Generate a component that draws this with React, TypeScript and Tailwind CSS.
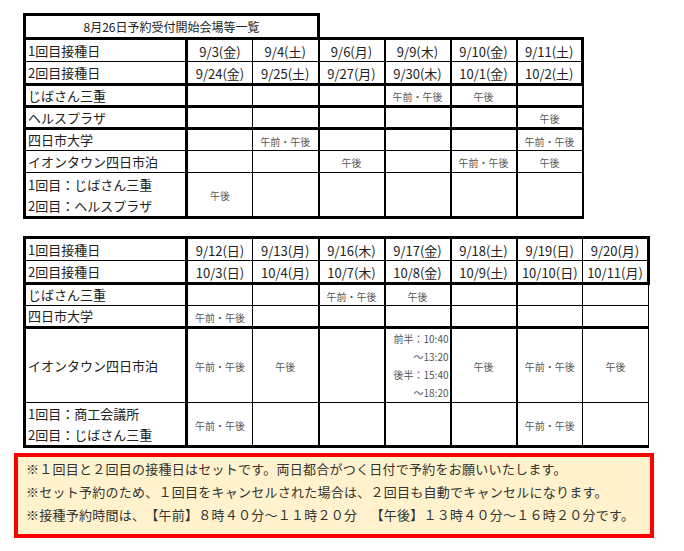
import React from "react";

const RB: Record<number, string> = {
  0: "",
  1: "border-r border-r-black",
  2: "border-r-2 border-r-black",
  3: "border-r-[3px] border-r-black",
};
const BB: Record<number, string> = {
  0: "",
  1: "border-b border-b-black",
  2: "border-b-2 border-b-black",
  3: "border-b-[3px] border-b-black",
};

type Row = {
  label: React.ReactNode;
  cells: React.ReactNode[];
  h: string;
  bottom: number;
  rights: number[];
  top?: boolean;
  date?: boolean;
  tall?: boolean;
};

function Slot({ t }: { t: string }) {
  return <span className="text-[10px] text-[#555]">{t}</span>;
}

function Sheet({ rows, cols, title }: { rows: Row[]; cols: number; title?: string }) {
  return (
    <table className="ml-[23px] border-collapse table-fixed">
      <colgroup>
        <col className="w-[162px]" />
        {Array.from({ length: cols }).map((_, i) => (
          <col key={i} className="w-[66px]" />
        ))}
      </colgroup>
      <tbody>
        {title && (
          <tr className="h-[24px]">
            <td
              colSpan={3}
              className="border-[3px] border-black p-0 text-center text-[12px] text-[#222] leading-[16px]"
            >
              {title}
            </td>
            <td colSpan={cols - 2} className="p-0"></td>
          </tr>
        )}
        {rows.map((r, ri) => (
          <tr key={ri} className={r.h}>
            <td
              className={`border-l-[3px] border-l-black p-0 pl-[2px] text-left align-middle text-[13px] text-[#222] ${r.tall ? "leading-[21px]" : "leading-[16px]"} ${RB[r.rights[0]]} ${BB[r.bottom]} ${r.top ? "border-t-[3px] border-t-black" : ""}`}
            >
              {r.label}
            </td>
            {r.cells.map((c, ci) => (
              <td
                key={ci}
                className={`text-center align-middle p-0 leading-[16px] ${RB[r.rights[ci + 1]]} ${BB[r.bottom]} ${r.top ? "border-t-[3px] border-t-black" : ""}`}
              >
                {typeof c === "string" ? (
                  r.date ? (
                    <span className="text-[13px] text-[#222] whitespace-nowrap">{c}</span>
                  ) : (
                    <Slot t={c} />
                  )
                ) : (
                  c
                )}
              </td>
            ))}
          </tr>
        ))}
      </tbody>
    </table>
  );
}

const AMPM = "午前・午後";
const PM = "午後";

const topHead = [3, 1, 2, 2, 2, 2, 3];
const topBody = [3, 1, 2, 2, 2, 2, 2];

const topRows: Row[] = [
  {
    label: "1回目接種日",
    cells: ["9/3(金)", "9/4(土)", "9/6(月)", "9/9(木)", "9/10(金)", "9/11(土)"],
    h: "h-[23px]",
    bottom: 1,
    rights: topHead,
    top: true,
    date: true,
  },
  {
    label: "2回目接種日",
    cells: ["9/24(金)", "9/25(土)", "9/27(月)", "9/30(木)", "10/1(金)", "10/2(土)"],
    h: "h-[23px]",
    bottom: 3,
    rights: topHead,
    date: true,
  },
  { label: "じばさん三重", cells: ["", "", "", AMPM, PM, ""], h: "h-[22px]", bottom: 3, rights: topBody },
  { label: "ヘルスプラザ", cells: ["", "", "", "", "", PM], h: "h-[22px]", bottom: 3, rights: topBody },
  { label: "四日市大学", cells: ["", AMPM, "", "", "", AMPM], h: "h-[22px]", bottom: 1, rights: topBody },
  { label: "イオンタウン四日市泊", cells: ["", "", PM, "", AMPM, PM], h: "h-[22px]", bottom: 1, rights: topBody },
  {
    label: (
      <>
        1回目：じばさん三重
        <br />
        2回目：ヘルスプラザ
      </>
    ),
    cells: [PM, "", "", "", "", ""],
    h: "h-[45px]",
    bottom: 3,
    rights: topBody,
    tall: true,
  },
];

const botHead = [3, 1, 2, 2, 2, 2, 1, 3];
const botBody = [3, 1, 2, 2, 2, 2, 1, 1];

const split = (
  <div className="text-[10px] text-[#555] text-right leading-[18px] pr-[1px]">
    前半：10:40
    <br />
    ～13:20
    <br />
    後半：15:40
    <br />
    ～18:20
  </div>
);

const botRows: Row[] = [
  {
    label: "1回目接種日",
    cells: ["9/12(日)", "9/13(月)", "9/16(木)", "9/17(金)", "9/18(土)", "9/19(日)", "9/20(月)"],
    h: "h-[23px]",
    bottom: 1,
    rights: botHead,
    top: true,
    date: true,
  },
  {
    label: "2回目接種日",
    cells: ["10/3(日)", "10/4(月)", "10/7(木)", "10/8(金)", "10/9(土)", "10/10(日)", "10/11(月)"],
    h: "h-[23px]",
    bottom: 3,
    rights: botHead,
    date: true,
  },
  { label: "じばさん三重", cells: ["", "", AMPM, PM, "", "", ""], h: "h-[22px]", bottom: 1, rights: botBody },
  { label: "四日市大学", cells: [AMPM, "", "", "", "", "", ""], h: "h-[22px]", bottom: 3, rights: botBody },
  {
    label: "イオンタウン四日市泊",
    cells: [AMPM, PM, "", split, PM, AMPM, PM],
    h: "h-[75px]",
    bottom: 1,
    rights: botBody,
  },
  {
    label: (
      <>
        1回目：商工会議所
        <br />
        2回目：じばさん三重
      </>
    ),
    cells: [AMPM, "", "", "", "", AMPM, ""],
    h: "h-[44px]",
    bottom: 3,
    rights: botBody,
    tall: true,
  },
];

export default function App() {
  return (
    <div className="w-[684px] h-[551px] bg-white pt-[13px] font-['Noto_Sans_CJK_JP',sans-serif]">
      <Sheet rows={topRows} cols={6} title="8月26日予約受付開始会場等一覧" />
      <div className="h-[17px]" />
      <Sheet rows={botRows} cols={7} />
      <div className="ml-[14px] mt-[5px] w-[640px] h-[85px] border-4 border-[#ff0000] bg-[#fff2cc] pl-[8px] text-[13px] leading-[23px] tracking-[0.25px] text-[#333] [text-spacing-trim:space-all]">
        <p>※１回目と２回目の接種日はセットです。両日都合がつく日付で予約をお願いいたします。</p>
        <p>※セット予約のため、１回目をキャンセルされた場合は、２回目も自動でキャンセルになります。</p>
        <p>※接種予約時間は、【午前】８時４０分～１１時２０分　【午後】１３時４０分～１６時２０分です。</p>
      </div>
    </div>
  );
}
